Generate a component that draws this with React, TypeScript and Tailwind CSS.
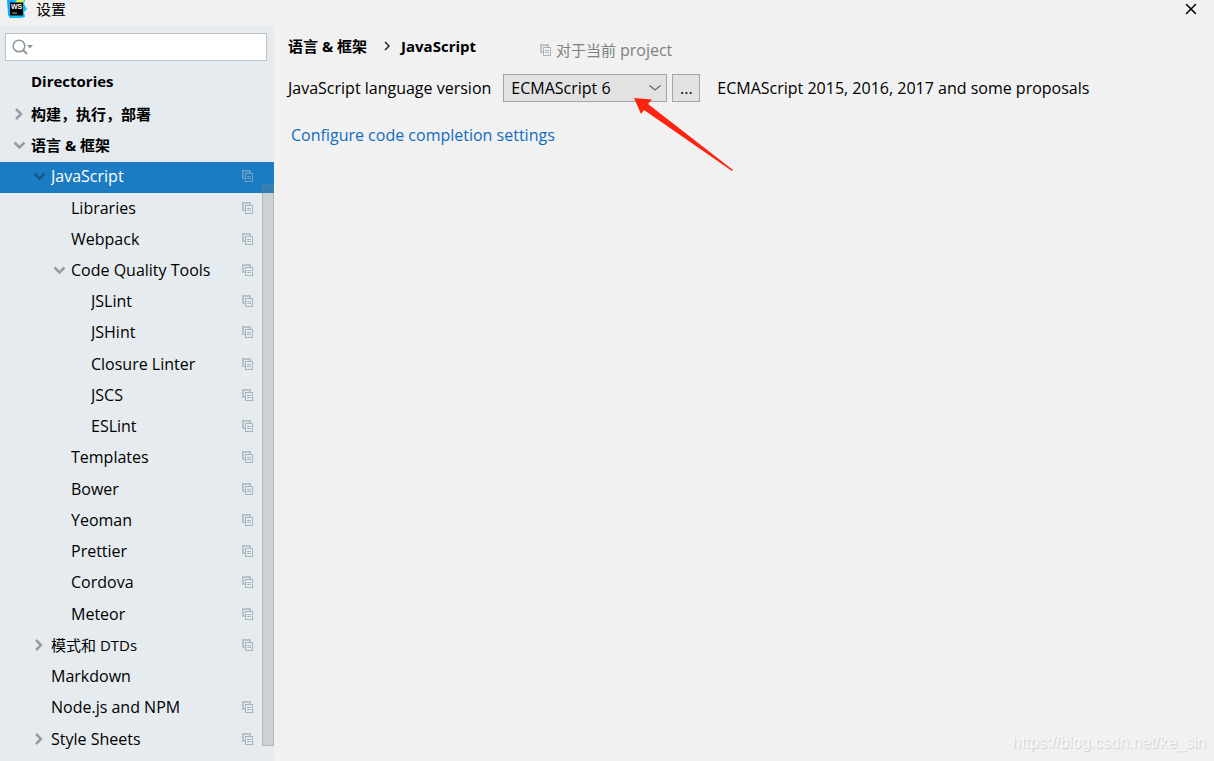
import { X } from 'lucide-react'

interface TreeItem {
  label: string
  level: 'top' | 'root' | 'one' | 'oneHan' | 'two' | 'three'
  state?: 'open' | 'closed'
  perProject?: boolean
  selected?: boolean
}

const items: TreeItem[] = [
  { label: 'Directories', level: 'top' },
  { label: '构建，执行，部署', level: 'root', state: 'closed' },
  { label: '语言 & 框架', level: 'root', state: 'open' },
  { label: 'JavaScript', level: 'one', state: 'open', perProject: true, selected: true },
  { label: 'Libraries', level: 'two', perProject: true },
  { label: 'Webpack', level: 'two', perProject: true },
  { label: 'Code Quality Tools', level: 'two', state: 'open', perProject: true },
  { label: 'JSLint', level: 'three', perProject: true },
  { label: 'JSHint', level: 'three', perProject: true },
  { label: 'Closure Linter', level: 'three', perProject: true },
  { label: 'JSCS', level: 'three', perProject: true },
  { label: 'ESLint', level: 'three', perProject: true },
  { label: 'Templates', level: 'two', perProject: true },
  { label: 'Bower', level: 'two', perProject: true },
  { label: 'Yeoman', level: 'two', perProject: true },
  { label: 'Prettier', level: 'two', perProject: true },
  { label: 'Cordova', level: 'two', perProject: true },
  { label: 'Meteor', level: 'two', perProject: true },
  { label: '模式和 DTDs', level: 'oneHan', state: 'closed', perProject: true },
  { label: 'Markdown', level: 'one' },
  { label: 'Node.js and NPM', level: 'one', perProject: true },
  { label: 'Style Sheets', level: 'one', state: 'closed', perProject: true },
]

// Han labels are set slightly smaller than the Latin ones
const rowStyle = {
  top: 'pl-3 pb-[6px] text-[15px] font-bold',
  root: 'pl-3 pb-[2px] text-[15px] font-bold',
  one: 'pl-8 pb-[2px]',
  oneHan: 'pl-8 pb-[2px] text-[15px]',
  two: 'pl-[52px] pb-[2px]',
  three: 'pl-[72px] pb-[2px]',
}

function CopyIcon({ className = '' }: { className?: string }) {
  return (
    <svg viewBox="0 0 12 12" className={`h-3 w-3 shrink-0 ${className}`} fill="none" stroke="currentColor" aria-hidden="true">
      <path d="M0 0h9v3H7V2H2v5h1v2H0z" fill="currentColor" fillOpacity=".75" stroke="none" />
      <rect x="3.5" y="3.5" width="7" height="8" />
      <path d="M5 6.5h4M5 8.5h4" />
    </svg>
  )
}

function AppLogo() {
  return (
    <svg viewBox="0 0 20 19" className="h-[19px] w-5" aria-hidden="true">
      <path d="M0 0h9l-3 18H3L1 15z" fill="#16a8f0" />
      <path d="M7 0h11l-1 4 3 5-3 3 1 5-4 1H3l-1-5z" fill="#07c3f2" />
      <path d="M10 0h7l-1 3H8z" fill="#d9ef5e" />
      <rect x="3" y="2.5" width="13" height="13" fill="#000" />
      <text x="4" y="9" fill="#fff" fontSize="7" fontWeight="700" fontFamily="Liberation Sans, sans-serif">WS</text>
      <path d="M5 13h5" stroke="#aaa" />
    </svg>
  )
}

function TreeArrow({ open }: { open: boolean }) {
  return (
    <svg viewBox="0 0 14 14" className="h-[14px] w-[14px]" fill="none" stroke="currentColor" strokeWidth="2.5" aria-hidden="true">
      <path d={open ? 'M2.5 4.5L7.5 9.5L12.5 4.5' : 'M4 2L9 7L4 12'} />
    </svg>
  )
}

function TreeRow({ item }: { item: TreeItem }) {
  return (
    <li
      role="treeitem"
      aria-selected={!!item.selected}
      aria-expanded={item.state ? item.state === 'open' : undefined}
      className={`flex min-h-6 flex-1 basis-0 ${item.selected ? 'bg-[#1b7cc3] text-white' : ''}`}
    >
      <button type="button" className={`flex w-full items-center pr-5 text-left ${rowStyle[item.level]}`}>
        <span className={`flex w-[19px] shrink-0 ${item.selected ? 'text-[#175685]' : 'text-[#999c9f]'}`}>
          {item.state && <TreeArrow open={item.state === 'open'} />}
        </span>
        <span className="flex-1 truncate">{item.label}</span>
        {item.perProject && <CopyIcon className={item.selected ? 'text-[#6fa3ca]' : 'text-[#a7b4bc]'} />}
      </button>
    </li>
  )
}

function Sidebar() {
  return (
    <aside className="relative flex w-[274px] shrink-0 flex-col bg-[#e6ebef] pb-[6px]">
      <label className="mr-[7px] ml-[5px] mt-[7px] mb-[7px] flex h-7 shrink-0 items-center border border-[#c0c2c4] bg-white pl-[6px]">
        <svg viewBox="0 0 22 16" className="h-4 w-[22px]" fill="none" stroke="#8e989e" strokeWidth="1.5" aria-hidden="true">
          <circle cx="7" cy="7" r="5.8" />
          <path d="M11 11l4 4" strokeWidth="2" />
          <path d="M15 6h6l-3 3.5z" fill="#8e989e" stroke="none" />
        </svg>
        <input type="text" aria-label="搜索" className="min-w-0 flex-1 px-1 outline-none" />
      </label>
      <ul role="tree" className="flex flex-1 flex-col">
        {items.map((item) => (
          <TreeRow key={item.label} item={item} />
        ))}
      </ul>
      <div className="absolute top-[158px] right-0 bottom-[15px] w-3 border border-[#7c8388]/30 bg-[#7c8388]/25" />
    </aside>
  )
}

function VersionSelect() {
  return (
    <div className="relative ml-3">
      <select
        id="language-version"
        className="h-7 w-[164px] appearance-none border border-[#a5a5a5] bg-[#e2e2e2] pl-[7px]"
      >
        <option>ECMAScript 6</option>
      </select>
      <svg viewBox="0 0 12 6" className="pointer-events-none absolute top-[11px] right-[6px] h-[6px] w-3" fill="none" stroke="#666" strokeWidth="1.2" aria-hidden="true">
        <path d="M.5.5L6 5 11.5.5" />
      </svg>
      <svg viewBox="0 0 100 74" className="pointer-events-none absolute top-6 left-[131px] h-[74px] w-[100px]" aria-hidden="true">
        <path d="M0 0L18 1.5 14 6 99 72 98 73 10 12 7 16z" fill="#ff2412" />
      </svg>
    </div>
  )
}

export default function App() {
  return (
    <div className="flex h-screen flex-col bg-[#f1f1f1] font-['Open_Sans','Noto_Sans_CJK_SC',sans-serif] text-base leading-5 text-black">
      <header className="flex h-[26px] shrink-0 items-start pl-[7px]">
        <AppLogo />
        <h1 className="ml-[9px] flex-1 text-[15px] leading-[18px]">设置</h1>
        <button type="button" aria-label="关闭" className="mr-[14px]">
          <X className="h-[18px] w-[18px]" strokeWidth={2} />
        </button>
      </header>

      <div className="flex min-h-0 flex-1">
        <Sidebar />
        <main className="relative min-w-0 flex-1 pt-[10px] pl-[14px]">
          <div className="flex items-start text-[15px]">
            <nav className="flex items-center font-bold">
              <a href="#frameworks">语言 &amp; 框架</a>
              <svg viewBox="0 0 6 10" className="mr-[11px] ml-[17px] h-[10px] w-[6px]" fill="none" stroke="#222" strokeWidth="1.5" aria-hidden="true">
                <path d="M1 1l4 4-4 4" />
              </svg>
              <span>JavaScript</span>
            </nav>
            <p className="mt-1 ml-16 flex items-center gap-1 text-[#808080]">
              <CopyIcon className="text-[#a7b4bc]" />
              <span>
                对于当前 <span className="text-base leading-5">project</span>
              </span>
            </p>
          </div>

          <div className="mt-[14px] flex items-center">
            <label htmlFor="language-version">JavaScript language version</label>
            <VersionSelect />
            <button type="button" className="ml-[5px] h-7 w-7 border border-[#a5a5a5] bg-[#e2e2e2]">
              ...
            </button>
            <span className="ml-[17px]">ECMAScript 2015, 2016, 2017 and some proposals</span>
          </div>

          <a href="#completion" className="mt-[23px] ml-[3px] inline-block text-[#0f6cbf]">
            Configure code completion settings
          </a>

          <p className="absolute right-2 bottom-2 font-['Liberation_Sans',sans-serif] text-base leading-5 text-[#f8f8f8] [text-shadow:1px_1px_1px_#ccc]">
            https://blog.csdn.net/ke_sin
          </p>
        </main>
      </div>
    </div>
  )
}
